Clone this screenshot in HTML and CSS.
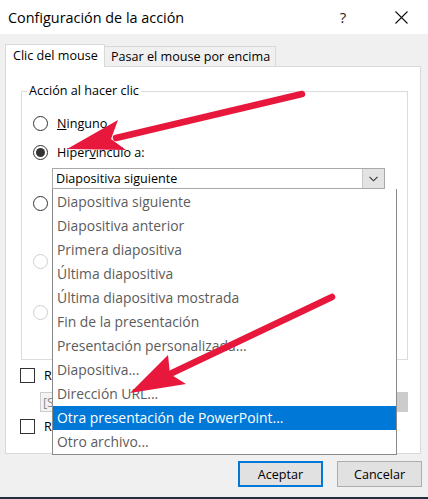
FILE: index.html
```html
<!DOCTYPE html>
<html lang="es">
<head>
<meta charset="utf-8">
<title>Configuración de la acción</title>
<link rel="stylesheet" href="styles.css">
</head>
<body>
<div class="window">
  <header class="titlebar">
    <span class="title">Configuración de la acción</span>
    <span class="help">?</span>
    <span class="close">
      <svg width="13" height="13" viewBox="0 0 13 13"><path d="M0.5 0.5 L12.5 12.5 M12.5 0.5 L0.5 12.5" stroke="#111" stroke-width="1.1" fill="none"/></svg>
    </span>
  </header>

  <div class="tabs">
    <div class="tab active">Clic del mouse</div>
    <div class="tab">Pasar el mouse por encima</div>
  </div>

  <section class="panel">
    <fieldset class="group">
      <legend>Acción al hacer clic</legend>
      <div class="radio-row r1"><span class="radio"></span><span class="label"><u>N</u>inguno</span></div>
      <div class="radio-row r2"><span class="radio checked"></span><span class="label">Hiper<u>v</u>ínculo a:</span></div>
      <div class="select-wrap">
        <div class="select">
          <span class="select-text">Diapositiva siguiente</span>
          <span class="select-btn">
            <svg width="9" height="6" viewBox="0 0 9 6"><path d="M0.5 0.8 L4.5 4.8 L8.5 0.8" stroke="#333" stroke-width="1.1" fill="none"/></svg>
          </span>
        </div>
        <ul class="dropdown">
          <li>Diapositiva siguiente</li>
          <li>Diapositiva anterior</li>
          <li>Primera diapositiva</li>
          <li>Última diapositiva</li>
          <li>Última diapositiva mostrada</li>
          <li>Fin de la presentación</li>
          <li>Presentación personalizada...</li>
          <li>Diapositiva...</li>
          <li>Dirección URL...</li>
          <li class="selected">Otra presentación de PowerPoint...</li>
          <li>Otro archivo...</li>
        </ul>
      </div>
      <div class="radio-row r3"><span class="radio"></span></div>
      <div class="radio-row r4"><span class="radio disabled"></span></div>
      <div class="radio-row r5"><span class="radio disabled"></span></div>
    </fieldset>

    <div class="check-row c1"><span class="check"></span><span class="label">R</span></div>
    <div class="combo">
      <span class="combo-text">[S</span>
      <span class="combo-btn"></span>
    </div>
    <div class="check-row c2"><span class="check"></span><span class="label">R</span></div>
  </section>

  <div class="buttons">
    <button class="btn default">Aceptar</button>
    <button class="btn">Cancelar</button>
  </div>

  <div class="bottom-edge"></div>

  <svg class="arrows" width="428" height="499" viewBox="0 0 428 499">
    <line x1="302" y1="94" x2="116" y2="138" stroke="#e8173c" stroke-width="6.5" stroke-linecap="round"/>
    <polygon points="67,149 118,120 111,139 126,150" fill="#e8173c"/>
    <line x1="332" y1="297" x2="172" y2="373" stroke="#e8173c" stroke-width="6.5" stroke-linecap="round"/>
    <polygon points="130,393 168,355 170,374 186,384" fill="#e8173c"/>
  </svg>
</div>
</body>
</html>
```

FILE: styles.css
```css
* {
  box-sizing: border-box;
  margin: 0;
  padding: 0;
}

html, body {
  width: 428px;
  height: 499px;
  overflow: hidden;
}

body {
  font-family: "Open Sans", "Noto Sans", "DejaVu Sans", sans-serif;
  font-size: 12.6px;
  color: #000;
  background: #f0f0f0;
}

.window {
  position: relative;
  height: 499px;
  display: flex;
  flex-direction: column;
}

/* Title bar */
.titlebar {
  height: 34px;
  background: #fff;
  display: flex;
  align-items: center;
  padding-left: 8px;
  padding-right: 4px;
}

.title {
  flex: 1;
  font-size: 14.4px;
  color: #000;
  white-space: nowrap;
}

.help {
  width: 46px;
  text-align: center;
  font-size: 15px;
  color: #222;
}

.close {
  width: 46px;
  margin-left: 12px;
  display: flex;
  justify-content: center;
  align-items: center;
}

/* Tabs */
.tabs {
  display: flex;
  align-items: flex-end;
  height: 22px;
  margin: 10px 0 0 5px;
}

.tab {
  height: 20px;
  padding: 0 6px;
  display: flex;
  align-items: center;
  white-space: nowrap;
  background: #f0f0f0;
  border: 1px solid #d9d9d9;
  border-bottom: none;
  border-left: none;
  color: #000;
}

.tab.active {
  position: relative;
  z-index: 1;
  width: 100px;
  height: 23px;
  margin-bottom: -1px;
  padding: 0 7px 2px;
  background: #fff;
  border-left: 1px solid #d9d9d9;
}

.tab:not(.active) {
  width: 171px;
}

/* Panel */
.panel {
  margin: 0 7px 0 5px;
  border: 1px solid #d9d9d9;
  background: #fff;
  padding: 14px 12px 19px 15px;
}

.group {
  border: 1px solid #dcdcdc;
  padding: 0 11px 37px 11px;
  display: flex;
  flex-direction: column;
}

.group legend {
  margin-left: -6px;
  padding: 0 2px;
  line-height: 20px;
}

.radio-row {
  height: 20px;
  display: flex;
  align-items: center;
}

.r1 { margin-top: 12px; }
.r2 { margin-top: 9px; }
.r3 { margin-top: 4px; }
.r4 { margin-top: 38px; }
.r5 { margin-top: 31px; }

.radio {
  width: 15px;
  height: 15px;
  border: 1px solid #333;
  border-radius: 50%;
  display: flex;
  align-items: center;
  justify-content: center;
  background: #fff;
}

.radio.checked::after {
  content: "";
  width: 9px;
  height: 9px;
  border-radius: 50%;
  background: #333;
}

.radio.disabled {
  border-color: #cfcfcf;
}

.label {
  margin-left: 9px;
}

/* Select */
.select-wrap {
  position: relative;
  margin: 6px 11px 0 19px;
}

.select {
  height: 21px;
  border: 1px solid #a9a9a9;
  display: flex;
  align-items: center;
  background: #fff;
}

.select-text {
  flex: 1;
  padding-left: 3px;
}

.select-btn {
  width: 22px;
  height: 100%;
  background: #e3e3e3;
  border-left: 1px solid #c8c8c8;
  display: flex;
  align-items: center;
  justify-content: center;
}

.dropdown {
  position: absolute;
  z-index: 5;
  top: 100%;
  left: 0;
  width: 345px;
  list-style: none;
  background: #fff;
  border: 1px solid #8a8a8a;
  border-top: none;
  padding-top: 1px;
}

.dropdown li {
  height: 24px;
  line-height: 24px;
  padding-left: 4px;
  font-size: 13.9px;
  color: #5c5c5c;
  white-space: nowrap;
}

.dropdown li.selected {
  background: #0078d7;
  color: #fff;
}

/* Check rows */
.check-row {
  height: 15px;
  display: flex;
  align-items: center;
  margin-left: -1px;
}

.c1 { margin-top: 8px; }
.c2 { margin-top: 7px; }

.check {
  width: 15px;
  height: 15px;
  border: 1px solid #333;
  background: #fff;
}

.combo {
  margin: 9px 0 0 19px;
  height: 20px;
  border: 1px solid #cccccc;
  background: #f3f3f3;
  display: flex;
  align-items: center;
}

.combo-text {
  flex: 1;
  padding-left: 2px;
  color: #8a8a8a;
}

.combo-btn {
  width: 11px;
  height: 100%;
  background: #cccccc;
}

/* Buttons */
.buttons {
  display: flex;
  justify-content: flex-end;
  gap: 14px;
  margin: 7px 6px 0 0;
}

.btn {
  width: 85px;
  height: 26px;
  font-family: inherit;
  font-size: 12.6px;
  color: #000;
  background: #e1e1e1;
  border: 1px solid #adadad;
}

.btn.default {
  border: 2px solid #0078d7;
}

.bottom-edge {
  margin-top: auto;
  height: 2px;
  background: #22303e;
}

.arrows {
  position: absolute;
  top: 0;
  left: 0;
  z-index: 10;
  pointer-events: none;
}
```
